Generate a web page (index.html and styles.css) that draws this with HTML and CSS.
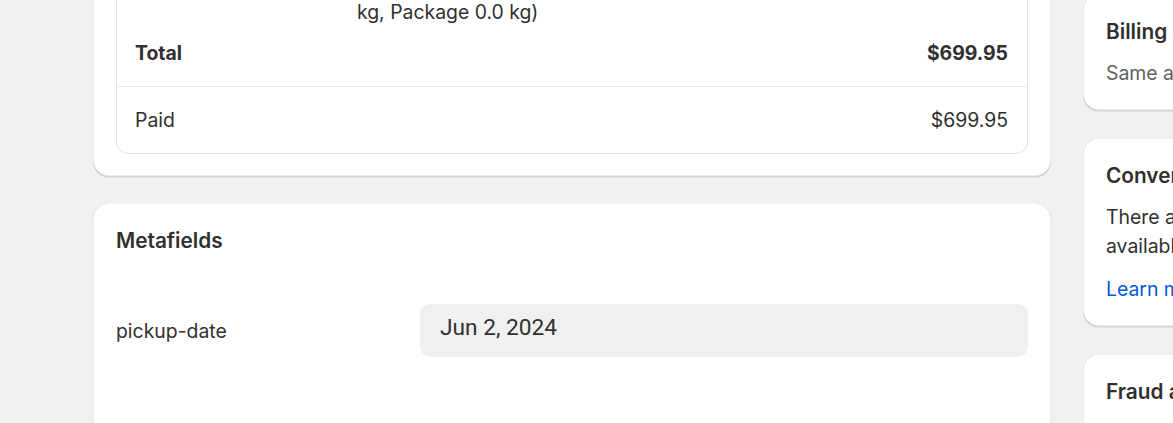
FILE: index.html
```html
<!DOCTYPE html>
<html lang="en">
<head>
<meta charset="utf-8">
<title>Order</title>
<link rel="stylesheet" href="styles.css">
</head>
<body>
<div class="layout">
  <main class="main">
    <section class="card">
      <div class="summary">
        <div class="summary-section">
          <div class="sum-row">
            <span class="sum-label">Subtotal</span>
            <span class="sum-desc">1 item</span>
            <span class="sum-amount">$699.95</span>
          </div>
          <div class="sum-row">
            <span class="sum-label">Shipping</span>
            <span class="sum-desc">Free Shipping (Items 0.0<br>kg, Package 0.0 kg)</span>
            <span class="sum-amount">$0.00</span>
          </div>
          <div class="sum-row total">
            <span class="sum-label">Total</span>
            <span class="sum-desc"></span>
            <span class="sum-amount">$699.95</span>
          </div>
        </div>
        <div class="summary-section paid">
          <div class="sum-row">
            <span class="sum-label">Paid</span>
            <span class="sum-desc"></span>
            <span class="sum-amount">$699.95</span>
          </div>
        </div>
      </div>
    </section>

    <section class="card">
      <h2 class="card-title">Metafields</h2>
      <div class="meta-list">
        <div class="meta-row">
          <label class="meta-label">pickup-date</label>
          <div class="meta-input">Jun 2, 2024</div>
        </div>
      </div>
    </section>
  </main>

  <aside class="sidebar">
    <section class="card">
      <h2 class="card-title">Billing address</h2>
      <p class="muted">Same as shipping address</p>
    </section>
    <section class="card">
      <h2 class="card-title">Conversion summary</h2>
      <p class="body">There aren't any conversion details available for this order.</p>
      <a class="link" href="#">Learn more</a>
    </section>
    <section class="card">
      <h2 class="card-title">Fraud analysis</h2>
      <p class="body">No fraud indicators found for this order.</p>
    </section>
  </aside>
</div>
</body>
</html>
```

FILE: styles.css
```css
* { box-sizing: border-box; }

html, body {
  margin: 0;
  padding: 0;
  background: #f1f1f1;
  overflow: hidden;
}

body {
  font-family: "Inter", "Noto Sans", sans-serif;
  font-size: 19.4px;
  line-height: 29px;
  color: #303030;
  width: 1173px;
  height: 423px;
}

.layout {
  display: flex;
  align-items: flex-start;
  gap: 32px;
  margin-top: -115px;
  padding-left: 93px;
  width: 1600px;
}

.main {
  width: 958px;
  flex-shrink: 0;
  display: flex;
  flex-direction: column;
  gap: 26px;
}

.sidebar {
  width: 370px;
  flex-shrink: 0;
  display: flex;
  flex-direction: column;
  gap: 27px;
  margin-top: 109px;
}

.card {
  background: #ffffff;
  border-radius: 16px;
  padding: 23px;
  box-shadow: 0 1px 0 0 rgba(26, 26, 26, 0.07),
              inset 0 -1.5px 0 0 rgba(0, 0, 0, 0.17),
              inset 1px 0 0 0 rgba(0, 0, 0, 0.08),
              inset -1px 0 0 0 rgba(0, 0, 0, 0.08),
              inset 0 1px 0 0 rgba(0, 0, 0, 0.05);
}

.card-title {
  margin: 0;
  font-size: 20.8px;
  line-height: 29px;
  font-weight: 620;
  color: #303030;
  white-space: nowrap;
}

.card-title + p { margin-top: 13px; }

p { margin: 0; }

.muted { color: #616161; }

.body + .link { display: block; margin-top: 14px; }

.link {
  color: #005bd3;
  text-decoration: none;
}

/* Summary */
.summary {
  border: 1px solid #e3e3e3;
  border-radius: 12px;
}

.summary-section {
  display: flex;
  flex-direction: column;
  gap: 12px;
  padding: 18.5px 19px 18.5px 18px;
}

.summary-section.paid {
  border-top: 1px solid #ebebeb;
}

.sum-row {
  display: grid;
  grid-template-columns: 222px 1fr auto;
  align-items: start;
}

.sum-amount { text-align: right; }

.total .sum-label,
.total .sum-amount {
  font-weight: 650;
}

/* Metafields */
.meta-list {
  padding-top: 49px;
  padding-bottom: 60px;
}

.meta-row {
  display: grid;
  grid-template-columns: 304px 1fr;
  align-items: center;
}

.meta-label {
  padding-top: 2px;
}

.meta-input {
  background: #f0f0f0;
  border-radius: 11px;
  height: 53px;
  padding: 10px 20px 0;
  font-family: "Roboto", "Liberation Sans", sans-serif;
  font-size: 22.7px;
  line-height: 28px;
  color: #303030;
}
```
